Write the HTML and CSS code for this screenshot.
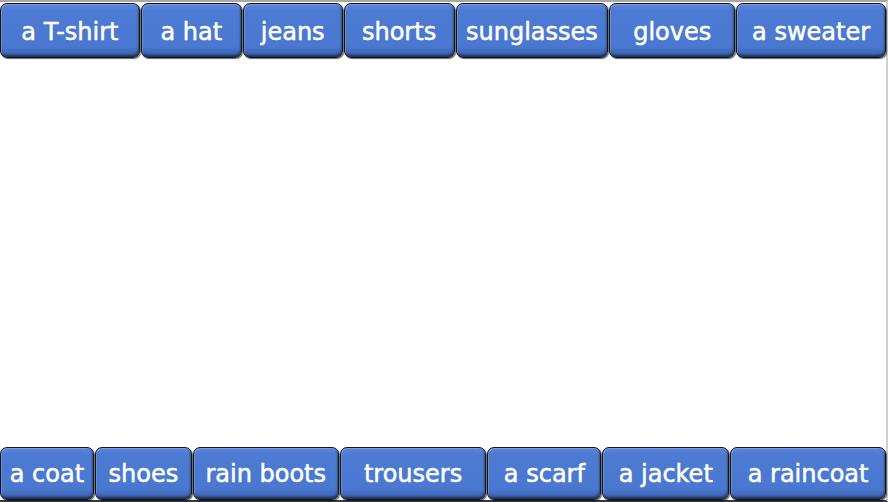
FILE: index.html
```html
<!DOCTYPE html>
<html>
<head>
<meta charset="utf-8">
<link rel="stylesheet" href="styles.css">
</head>
<body>
<div class="frame">
  <div class="row top">
    <div class="btn">a T-shirt</div>
    <div class="btn">a hat</div>
    <div class="btn">jeans</div>
    <div class="btn">shorts</div>
    <div class="btn">sunglasses</div>
    <div class="btn">gloves</div>
    <div class="btn">a sweater</div>
  </div>
  <div class="row bottom">
    <div class="btn">a coat</div>
    <div class="btn">shoes</div>
    <div class="btn">rain boots</div>
    <div class="btn">trousers</div>
    <div class="btn">a scarf</div>
    <div class="btn">a jacket</div>
    <div class="btn">a raincoat</div>
  </div>
</div>
</body>
</html>
```
FILE: styles.css
```css
html, body {
  margin: 0;
  padding: 0;
  background: #ffffff;
}
.frame {
  width: 886px;
  height: 498px;
  border-top: 2px solid #a8a8a8;
  border-right: 2px solid #cfcfcf;
  border-bottom: 2px solid #3a3a3a;
  display: flex;
  flex-direction: column;
  justify-content: space-between;
  background: #fff;
}
.row {
  display: flex;
  gap: 1px;
}
.row.top {
  padding-top: 1px;
}
.btn {
  box-sizing: border-box;
  height: 55px;
  border: 1px solid #141414;
  border-radius: 7px;
  background: linear-gradient(to bottom, #5b88dc 0%, #4d7bd3 12%, #4a78d0 80%, #3f68bb 92%, #2c4a86 100%);
  box-shadow: inset 1px 1px 0 rgba(255,255,255,0.18), inset -1px -2px 2px rgba(0,0,0,0.35), 1px 1px 1px rgba(0,0,0,0.6);
  color: #ffffff;
  font-family: "DejaVu Sans", "Open Sans", sans-serif;
  font-size: 24px;
  -webkit-text-stroke: 0.5px #ffffff;
  display: flex;
  align-items: center;
  justify-content: center;
  white-space: nowrap;
  padding-top: 2px;
}
.row.bottom .btn { height: 53px; padding-top: 1px; }
.top .btn:nth-child(1) { width: 140px; }
.top .btn:nth-child(2) { width: 101px; }
.top .btn:nth-child(3) { width: 100px; }
.top .btn:nth-child(4) { width: 111px; }
.top .btn:nth-child(5) { width: 153px; }
.top .btn:nth-child(6) { width: 126px; }
.top .btn:nth-child(7) { width: 150px; }
.bottom .btn:nth-child(1) { width: 94px; }
.bottom .btn:nth-child(2) { width: 97px; }
.bottom .btn:nth-child(3) { width: 146px; }
.bottom .btn:nth-child(4) { width: 147px; }
.bottom .btn:nth-child(5) { width: 114px; }
.bottom .btn:nth-child(6) { width: 127px; }
.bottom .btn:nth-child(7) { width: 156px; }
```
